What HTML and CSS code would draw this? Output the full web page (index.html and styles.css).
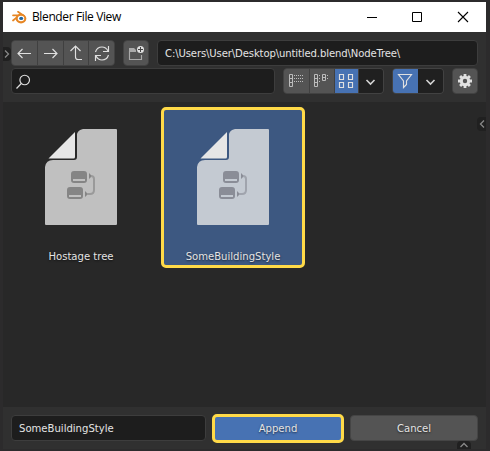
FILE: index.html
```html
<!DOCTYPE html>
<html lang="en">
<head>
<meta charset="utf-8">
<title>Blender File View</title>
<link rel="stylesheet" href="styles.css">
</head>
<body>
<svg width="0" height="0" class="defs" aria-hidden="true">
  <symbol id="document" viewBox="0 0 72 96">
    <path class="paper" d="M38 0H71Q72 0 72 1V95Q72 96 71 96H1Q0 96 0 95V38Q1 31 8 31H29Q32 31 32 28V5Q33 1 38 0Z"/>
    <path class="fold" d="M3.500 29.500L30 3V28Q30 29.500 28.500 29.500Z"/>
    <g class="node">
      <path fill-rule="evenodd" d="M29 42H39Q42 42 42 45V51Q42 54 39 54H29Q26 54 26 51V45Q26 42 29 42ZM28 50V52H40V50Z"/>
      <path fill-rule="evenodd" d="M25 58H35Q38 58 38 61V67Q38 70 35 70H25Q22 70 22 67V61Q22 58 25 58ZM24 66V68H36V66Z"/>
      <path d="M44 44L47 47L44 50ZM40 62L43 65L40 68Z"/>
    </g>
    <path class="link" d="M46 47Q49 47 49 50V61Q49 65 45 65H42"/>
  </symbol>
</svg>
<main class="window">
  <header class="titlebar">
    <svg class="logo" width="15" height="13" viewBox="0 0 15 13"><path d="M1 9.500L8 3.800M1 4.300H8M6 .8L12 5" fill="none" stroke="#e68624" stroke-width="1.700" stroke-linecap="round"/><ellipse cx="9" cy="7.600" rx="4.300" ry="3.800" fill="#fff" stroke="#e68624" stroke-width="2.100"/><ellipse cx="9.200" cy="7.400" rx="2" ry="1.700" fill="#2367a2"/></svg>
    <h1>Blender File View</h1>
    <svg class="controls" width="104" height="12" viewBox="366 10 104 12" fill="none" stroke="#000"><path d="M367 16.500H377"/><path d="M412.500 11.500H421.500V20.500H412.500Z"/><path d="M458 11L468 21M468 11L458 21" stroke-width="1.100"/></svg>
  </header>
  <section class="toolbar">
    <span class="tab tab-left"><svg width="6" height="10" viewBox="0 0 6 10"><path d="M1 1.500L4.500 5L1 8.500"/></svg></span>
    <div class="row">
      <div class="group nav">
        <button><svg viewBox="12 41 25 25"><path d="M31 53.500H18.500M22.500 49L18 53.500L22.500 58"/></svg></button>
        <button><svg viewBox="37 41 25 25"><path d="M43 53.500H55.500M51.500 49L56 53.500L51.500 58"/></svg></button>
        <button><svg viewBox="63 41 25 25"><path d="M70.500 51L75.500 46L80.500 51M75.500 46V57Q75.500 59.500 78 59.500H82"/></svg></button>
        <button><svg viewBox="89 41 25 25"><path d="M95.500 52Q97 47 102 47Q106 47 108 51M108.500 46V51.500H103M108.500 55Q107 60 102 60Q98 60 96 56M95.500 61V55.500H101"/></svg></button>
      </div>
      <div class="group folder"><button><svg viewBox="124 41 25 25"><path class="dim" d="M136 51.500H129.500V59.500H141.500V55"/><path d="M129 48H134L136 50V52H129Z" fill="#aaa" stroke="none"/><circle cx="140.500" cy="49.500" r="3.500" fill="#e0e0e0" stroke="none"/><path class="plus" d="M138 49.500H143M140.500 47V52"/></svg></button></div>
      <div class="field path"><span>C:\Users\User\Desktop\untitled.blend\NodeTree\</span></div>
    </div>
    <div class="row">
      <div class="field search"><svg width="17" height="17" viewBox="15 72 17 17"><circle cx="24.700" cy="79" r="4.800"/><path d="M21.300 82.500L16.500 87.500"/></svg></div>
      <div class="group display">
        <button><svg viewBox="284 69 25 25"><path class="list" d="M289.500 74.500H292.500V86.500H289.500ZM289.500 78.500H292.500M289.500 82.500H292.500"/><path class="dots" d="M294 75.500H304M294 78.500H304M294 81.500H304"/></svg></button>
        <button><svg viewBox="309 69 25 25"><path class="list" d="M314.500 74.500H317.500V86.500H314.500ZM314.500 78.500H317.500M314.500 82.500H317.500M322.500 74.500H325.500V80.500H322.500ZM322.500 77.500H325.500"/><path class="dots" d="M319 75.500H321M319 78.500H321M319 81.500H321M327 75.500H329M327 78.500H329"/></svg></button>
        <button class="active"><svg viewBox="333 69 25 25"><path d="M338.500 74.500H342.500V79.500H338.500ZM347.500 74.500H351.500V79.500H347.500ZM338.500 82.500H342.500V87.500H338.500ZM347.500 82.500H351.500V87.500H347.500Z"/></svg></button>
        <button class="menu"><svg viewBox="358 69 25 25"><path class="chevron" d="M366.500 80L370.500 84L374.500 80"/></svg></button>
      </div>
      <div class="group filter">
        <button class="active"><svg viewBox="393 69 25 25"><path d="M398.500 74.500H411.500L406.500 81V84.500L403.500 87.500V81Z"/></svg></button>
        <button class="menu"><svg viewBox="418 69 25 25"><path class="chevron" d="M426.500 80L430.500 84L434.500 80"/></svg></button>
      </div>
      <div class="group settings"><button><svg viewBox="453 69 25 25"><circle cx="465" cy="81" r="3.700" stroke-width="3"/><path stroke-width="2.800" d="M465 74V77M465 85V88M458 81H461M469 81H472M460.100 76.100L462 78M468 84L469.900 85.900M460.100 85.900L462 84M468 78L469.900 76.100"/></svg></button></div>
    </div>
  </section>
  <section class="files">
    <article class="file"><svg class="document"><use href="#document"/></svg><span class="name">Hostage tree</span></article>
    <article class="file selected"><svg class="document"><use href="#document"/></svg><span class="name">SomeBuildingStyle</span></article>
    <span class="tab tab-right"><svg width="6" height="10" viewBox="0 0 6 10"><path d="M5 1.500L1.500 5L5 8.500"/></svg></span>
  </section>
  <footer class="footer">
    <div class="field filename"><span>SomeBuildingStyle</span></div>
    <button class="action append"><span>Append</span></button>
    <button class="action cancel"><span>Cancel</span></button>
    <span class="tab tab-bottom"><svg width="10" height="6" viewBox="0 0 10 6"><path d="M1.500 5L5 1.500L8.500 5"/></svg></span>
  </footer>
</main>
</body>
</html>
```
FILE: styles.css
```css
* { box-sizing: border-box; }
body {
  margin: 0;
  width: 490px;
  height: 451px;
  padding: 2px 4px 2px 3px;
  overflow: hidden;
  background: #2c2b2c;
  color: #e4e4e4;
  font: 11.2px/14px "DejaVu Sans Condensed", "DejaVu Sans", sans-serif;
  font-stretch: condensed;
}
.defs { position: absolute; }
.window { width: 483px; height: 447px; display: flex; flex-direction: column; background: #303030; }
.titlebar { height: 30px; display: flex; align-items: center; padding: 0 16px 0 9px; background: #fff; color: #000; }
.titlebar h1 { margin: 0 auto 0 5px; font: 12px/16px "Open Sans", sans-serif; letter-spacing: -.38px; }
.logo { margin-top: 1px; }
.toolbar { position: relative; height: 70px; padding: 8px 8px 0; display: flex; flex-direction: column; gap: 2px; }
.row { display: flex; gap: 8px; height: 26px; }
button { padding: 0; border: 0; background: #545454; color: inherit; font: inherit; }
.group { display: flex; gap: 1px; height: 26px; border: 1px solid #424242; border-radius: 4px; background: #404040; overflow: hidden; }
.group button { flex: 1; min-width: 0; display: flex; align-items: center; justify-content: center; }
.group svg { width: 25px; height: 25px; flex: none; }
.row svg { fill: none; stroke: #e0e0e0; stroke-width: 1.15; }
.nav { width: 104px; }
.folder, .settings { width: 26px; }
.display { width: 101px; gap: 0; }
.display button { flex: 0 0 25px; justify-content: flex-start; }
.display .active { flex-basis: 24px; }
.display button + button { box-shadow: inset 1px 0 #414141; }
.filter { width: 52px; gap: 0; }
.group .active { background: #4772b3; }
.group .menu { background: #202020; }
.row .dim { stroke: #aaa; }
.row .plus { stroke: #444; stroke-width: 1; }
.row .list { stroke: #bcbcbc; stroke-width: 1; }
.row .dots { stroke: #bcbcbc; stroke-width: 1; stroke-dasharray: 1 1; }
.row .chevron { stroke-width: 1.6; stroke: #d4d4d4; }
.field { height: 26px; display: flex; align-items: center; border: 1px solid #3d3d3d; border-radius: 4px; background: #1d1d1d; }
.field span { padding-top: 1px; }
.path { flex: 1; padding-left: 7px; letter-spacing: -.12px; }
.search { width: 264px; padding-left: 3px; }
.files { position: relative; height: 305px; display: flex; gap: 8px; padding: 5px 6px; background: #282828; }
.file { --paper: #c0c0c0; --node: #858585; --link: #9a9a9a; width: 144px; height: 161px; display: flex; flex-direction: column; align-items: center; padding: 22px 0 0; }
.file.selected { --paper: #c4cad2; --node: #8a8d97; --link: #a0a4ad; background: #3d5881; border: 3px solid #ffda48; border-radius: 5px; padding-top: 19px; }
.document { width: 72px; height: 96px; }
.paper { fill: var(--paper); }
.fold { fill: #e6e6e6; }
.node { fill: var(--node); }
.link { fill: none; stroke: var(--link); stroke-width: 2; }
.name { margin-top: 25px; text-shadow: 0 1px 2px #0009; }
.footer { position: relative; flex: 1; display: flex; align-items: flex-start; padding: 8px 8px 0; }
.filename { width: 195px; padding-left: 7px; }
.action { display: flex; align-items: center; justify-content: center; text-shadow: 0 1px 2px #0009; }
.append { width: 132px; height: 29px; margin: -1px 6px 0; background: #4772b3; border: 3px solid #ffda48; border-radius: 5px; }
.cancel { width: 128px; height: 26px; padding-top: 1px; border: 1px solid #454545; border-radius: 4px; }
.tab { position: absolute; display: flex; align-items: center; justify-content: center; background: #202020; }
.tab svg { fill: none; stroke: #888; stroke-width: 1.3; }
.tab-left { left: 0; top: 15px; width: 8px; height: 14px; border-radius: 0 4px 4px 0; }
.tab-right { right: 0; top: 15px; width: 9px; height: 14px; border-radius: 4px 0 0 4px; }
.tab-bottom { right: 15px; bottom: 0; width: 14px; height: 8px; border-radius: 4px 4px 0 0; }
```
